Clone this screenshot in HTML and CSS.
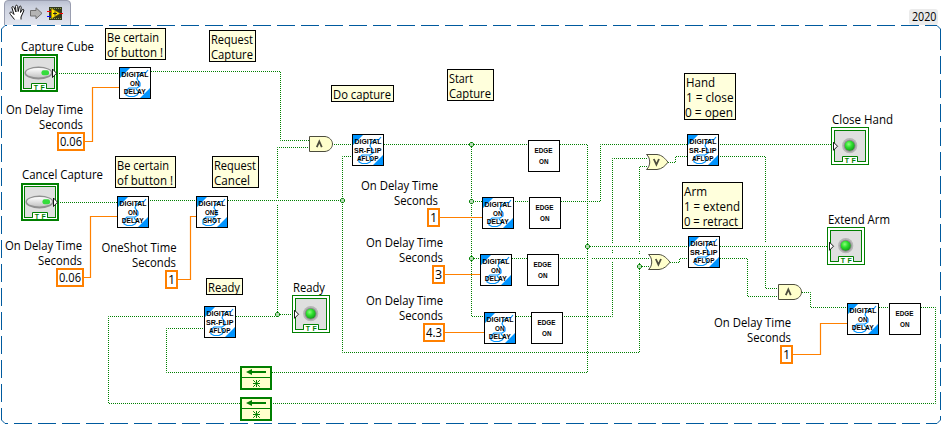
FILE: index.html
```html
<!DOCTYPE html>
<html lang="en">
<head>
<meta charset="utf-8">
<title>Block diagram</title>
<link rel="stylesheet" href="styles.css">
</head>
<body>
<svg class="diagram" width="942" height="425" viewBox="0 0 942 425">
  <defs>
    <pattern id="dots" width="2" height="2" patternUnits="userSpaceOnUse">
      <rect class="dot" width="1" height="1"/><rect class="dot" x="1" y="1" width="1" height="1"/>
    </pattern>
    <linearGradient id="tabFill" x1="0" y1="0" x2="0" y2="1">
      <stop offset="0" stop-color="#b9bfd0"/><stop offset=".25" stop-color="#ccd1df"/><stop offset="1" stop-color="#e3e6ef"/>
    </linearGradient>
    <radialGradient id="led" cx=".4" cy=".35" r=".7">
      <stop offset="0" stop-color="#8cff7c"/><stop offset=".45" stop-color="#2fe02f"/><stop offset="1" stop-color="#119a18"/>
    </radialGradient>
    <linearGradient id="pill" x1="0" y1="0" x2="0" y2="1">
      <stop offset="0" stop-color="#fff"/><stop offset="1" stop-color="#c4c4c4"/>
    </linearGradient>
    <g id="vi">
      <rect class="block" x=".5" y=".5" width="31" height="31"/>
      <path class="corner" d="M1 1H11L1 11ZM31 31V21L21 31Z"/>
      <path class="squiggle" d="M29 3L27 5.500H23L19 9L18 12L21 16V19L18 21H10L7 24V28L10 29.500H15L18 28L20 25L17 22"/>
      <text class="pixel" lengthAdjust="spacingAndGlyphs" x="2.500" y="10" textLength="27">DIGITAL</text>
    </g>
    <g id="delay">
      <use href="#vi"/>
      <text class="pixel" lengthAdjust="spacingAndGlyphs" x="11" y="19" textLength="9.500">ON</text>
      <text class="pixel" lengthAdjust="spacingAndGlyphs" x="4.700" y="27" textLength="22">DELAY</text>
    </g>
    <g id="shot">
      <use href="#vi"/>
      <text class="pixel" lengthAdjust="spacingAndGlyphs" x="9" y="19" textLength="13.500">ONE</text>
      <text class="pixel" lengthAdjust="spacingAndGlyphs" x="7" y="27" textLength="18">SHOT</text>
    </g>
    <g id="flip">
      <use href="#vi"/>
      <text class="pixel" lengthAdjust="spacingAndGlyphs" x="2" y="19" textLength="27.500">SR-FLIP</text>
      <text class="pixel" lengthAdjust="spacingAndGlyphs" x="5" y="27" textLength="21.500">AFLOP</text>
    </g>
    <g id="edge">
      <rect class="block" x=".5" y=".5" width="31" height="31"/>
      <text class="pixel" lengthAdjust="spacingAndGlyphs" x="6.500" y="13" textLength="18">EDGE</text>
      <text class="pixel" lengthAdjust="spacingAndGlyphs" x="11" y="24" textLength="9.500">ON</text>
    </g>
    <g id="tf">
      <path class="tf-box" d="M11.500 34.500V29.500H26.500V34.500"/>
      <path class="tf-gap" d="M12 34.500H26"/>
      <text class="tf-text" x="13.700" y="36" textLength="11">TF</text>
    </g>
    <g id="control">
      <rect class="control-frame" x="1" y="1" width="36" height="36"/>
      <rect class="face" x="3.500" y="3.500" width="31" height="31"/>
      <ellipse class="pill-rim" cx="18.500" cy="19" rx="14" ry="6.500"/>
      <ellipse class="pill" cx="18.500" cy="18.700" rx="12.500" ry="4.800"/>
      <rect class="pill-light" x="21.500" y="16.200" width="7.500" height="5" rx="2"/>
      <path class="port" d="M32.500 15V23.500L36.500 19.200Z"/>
      <use href="#tf"/>
    </g>
    <g id="indicator">
      <rect class="indicator-frame" x=".5" y=".5" width="37" height="37"/>
      <rect class="face" x="3.500" y="3.500" width="31" height="31"/>
      <circle class="bezel-outer" cx="18.700" cy="18.700" r="7.600"/>
      <circle class="bezel" cx="18.700" cy="18.700" r="6"/>
      <circle class="lamp" cx="18.700" cy="18.700" r="5"/>
      <path class="port" d="M2.500 15.200V23.300L6.500 19.200Z"/>
      <use href="#tf"/>
    </g>
    <g id="and">
      <path class="gate" d="M.5 .5H16C20.500 1 23.500 4.500 23.500 8S20.500 15 16 15.500H.5Z"/>
      <path class="gate-sign" d="M7.800 11.200L10.300 5.500L12.800 11.200"/>
    </g>
    <g id="or">
      <path class="gate" d="M.5 .5H11C16 1 19 4.500 22 8.200C19 12 16 15 11 15.500H.5C4.800 12 4.800 4 .5 .5Z"/>
      <path class="gate-sign" d="M7.800 5L10.400 10.700L13 5"/>
    </g>
    <g id="feedback">
      <rect class="feedback-box" x="1" y="1" width="30" height="22"/>
      <path class="feedback-line" d="M1 11.500H31"/>
      <path class="feedback-arrow" d="M6 6L12 3V5H26V7H12V9Z"/>
      <path class="feedback-line" d="M13 17.500H20M16.500 14V21M13.200 14.200L15.500 16.500M19.800 14.200L17.500 16.500M13.200 20.800L15.500 18.500M19.800 20.800L17.500 18.500"/>
    </g>
    <g id="node">
      <path class="junction" d="M-1 -2H1L2 -1V1L1 2H-1L-2 1V-1Z"/>
    </g>
  </defs>

  <!-- Structure frame -->
  <g class="frame">
    <path d="M5 25.500H937" stroke-dashoffset="-8"/>
    <path d="M5 423.500H937" stroke-dashoffset="-9"/>
    <path d="M1.500 29V420" stroke-dashoffset="5"/>
    <path d="M940.500 32V418"/>
    <path class="frame-corner" d="M1.500 31V29L5 25.500H7M935 25.500H937L940.500 29V50M1.500 418V420L5 423.500M937 423.500L940.500 420V417"/>
  </g>

  <!-- Subdiagram tab -->
  <path class="tab" d="M4.500 25V4Q4.500 .5 8 .5H67Q70.500 .5 70.500 4V25"/>
  <path class="hand" d="M14.500 19.500L10.500 14.500C9 12.500 10.500 11.500 12 12.500L14 14.500L12 8C11.500 6.300 13.300 6 14 7.500L16 12L15.500 6.500C15.500 4.800 17.500 4.800 17.700 6.500L18.200 11.500L19.300 7C19.800 5.500 21.500 6 21.200 7.500L20.500 12.500L22 10C23 8.500 24.300 9.500 23.700 11L21 17V19.500"/>
  <path class="step" d="M30.500 10.500H36V7.800L42 13.300L36 18.800V16H30.500Z"/>
  <rect class="chip" x="49" y="7" width="13" height="13"/>
  <path class="chip-pins" d="M50 8.500H62M50 18.500H62"/>
  <path class="chip-red" d="M47 11.500H51M59 13.500H63"/>
  <path class="chip-blue" d="M47 16.500H51"/>
  <path class="chip-arrow" d="M51.500 8.500L60 13.500L51.500 18.500Z"/>
  <path class="chip-plus" d="M53 13.500H57M55 11.500V15.500"/>
  <rect class="year-box" x="909" y="9" width="29" height="16" rx="3"/>

  <!-- Boolean wires -->
  <g class="wire">
    <path d="M58 73.500H119"/>
    <path d="M151 71.500H280.500V140.500H309"/>
    <path d="M334 144.500H352"/>
    <path d="M59 202.500H117"/>
    <path d="M149 200.500H196"/>
    <path d="M228 200.500H342.500"/>
    <path d="M352 156.500H342.500V352.500H639.500V263M639.500 254V250M639.500 243V166.500H648"/>
    <path d="M309 147.500H277.500V198M277.500 204V314.500H292"/>
    <path d="M236 316.500H277"/>
    <path d="M384 144.500H528"/>
    <path d="M471.500 144.500V316.500H484"/>
    <path d="M472 201.500H482M514 201.500H529"/>
    <path d="M472 258.500H480M512 258.500H527"/>
    <path d="M516 316.500H531"/>
    <path d="M560 144.500H587.500V372.500H272"/>
    <path d="M240 372.500H166.500V328.500H204"/>
    <path d="M561 201.500H600.500V144.500H687"/>
    <path d="M559 258.500H585M591 258.500H650"/>
    <path d="M563 316.500H612.500V262M612.500 254V250M612.500 243V158.500H648"/>
    <path d="M588 246.500H688"/>
    <path d="M640 266.500H650"/>
    <path d="M668 162.500H675.500V156.500H687"/>
    <path d="M670 262.500H679.500V258.500H688"/>
    <path d="M719 144.500H831"/>
    <path d="M719 156.500H765.500V243M765.500 250V288.500H778"/>
    <path d="M720 246.500H827"/>
    <path d="M720 258.500H747.500V296.500H778"/>
    <path d="M802 292.500H810.500V307.500H847"/>
    <path d="M879 307.500H889"/>
    <path d="M921 307.500H935.500V403.500H272"/>
    <path d="M240 403.500H108.500V316.500H204"/>
  </g>

  <!-- Numeric wires -->
  <g class="numeric-wire">
    <path d="M85 141.500H92.500V87.500H119"/>
    <path d="M84 277.500H90.500V216.500H117"/>
    <path d="M178 279.500H190.500V216.500H196"/>
    <path d="M440 217.500H482M445 274.500H480M445 332.500H484"/>
    <path d="M793 354.500H820.500V323.500H847"/>
  </g>

  <use href="#node" x="342.500" y="200.500"/>
  <use href="#node" x="471.500" y="144.500"/>
  <use href="#node" x="471.500" y="201.500"/>
  <use href="#node" x="471.500" y="258.500"/>
  <use href="#node" x="587.500" y="246.500"/>
  <use href="#node" x="639.500" y="266.500"/>
  <use href="#node" x="277.500" y="314.500"/>

  <use href="#control" x="20" y="54"/>
  <use href="#control" x="21" y="183"/>
  <use href="#indicator" x="292" y="295"/>
  <use href="#indicator" x="831" y="127"/>
  <use href="#indicator" x="827" y="227"/>

  <use href="#delay" x="119" y="67"/>
  <use href="#delay" x="117" y="196"/>
  <use href="#shot" x="196" y="196"/>
  <use href="#flip" x="204" y="306"/>
  <use href="#flip" x="352" y="134"/>
  <use href="#delay" x="482" y="197"/>
  <use href="#delay" x="480" y="254"/>
  <use href="#delay" x="484" y="312"/>
  <use href="#flip" x="687" y="134"/>
  <use href="#flip" x="688" y="236"/>
  <use href="#delay" x="847" y="303"/>
  <use href="#edge" x="528" y="140"/>
  <use href="#edge" x="529" y="197"/>
  <use href="#edge" x="527" y="254"/>
  <use href="#edge" x="531" y="312"/>
  <use href="#edge" x="889" y="303"/>

  <use href="#and" x="309" y="136"/>
  <use href="#and" x="778" y="284"/>
  <use href="#or" x="646" y="154"/>
  <use href="#or" x="648" y="254"/>
  <use href="#feedback" x="240" y="366"/>
  <use href="#feedback" x="240" y="397"/>

  <!-- Comments -->
  <g class="note">
    <rect x="105.500" y="28.500" width="60" height="31"/>
    <rect x="209.500" y="30.500" width="46" height="31"/>
    <rect x="115.500" y="156.500" width="60" height="31"/>
    <rect x="212.500" y="156.500" width="46" height="31"/>
    <rect x="206.500" y="278.500" width="36" height="16"/>
    <rect x="331.500" y="85.500" width="62" height="16"/>
    <rect x="447.500" y="69.500" width="46" height="31"/>
    <rect x="684.500" y="73.500" width="51" height="46"/>
    <rect x="682.500" y="182.500" width="60" height="46"/>
  </g>

  <!-- Constants -->
  <g class="constant">
    <rect x="58" y="133" width="26" height="17"/>
    <rect x="57" y="269" width="26" height="17"/>
    <rect x="166" y="271" width="11" height="17"/>
    <rect x="428" y="209" width="11" height="17"/>
    <rect x="433" y="266" width="11" height="17"/>
    <rect x="424" y="324" width="20" height="17"/>
    <rect x="781" y="346" width="11" height="17"/>
  </g>

  <g class="label">
    <text lengthAdjust="spacingAndGlyphs" x="107" y="41.500" textLength="52">Be certain</text>
    <text lengthAdjust="spacingAndGlyphs" x="107" y="56.500" textLength="56">of button !</text>
    <text lengthAdjust="spacingAndGlyphs" x="211" y="43.500" textLength="42">Request</text>
    <text lengthAdjust="spacingAndGlyphs" x="211" y="58.500" textLength="42">Capture</text>
    <text lengthAdjust="spacingAndGlyphs" x="117" y="169.500" textLength="52">Be certain</text>
    <text lengthAdjust="spacingAndGlyphs" x="117" y="184.500" textLength="56">of button !</text>
    <text lengthAdjust="spacingAndGlyphs" x="214" y="169.500" textLength="42">Request</text>
    <text lengthAdjust="spacingAndGlyphs" x="214" y="184.500" textLength="36">Cancel</text>
    <text lengthAdjust="spacingAndGlyphs" x="208" y="291.500" textLength="32">Ready</text>
    <text lengthAdjust="spacingAndGlyphs" x="333" y="98.500" textLength="58">Do capture</text>
    <text lengthAdjust="spacingAndGlyphs" x="449" y="82.500" textLength="24">Start</text>
    <text lengthAdjust="spacingAndGlyphs" x="449" y="97.500" textLength="42">Capture</text>
    <text lengthAdjust="spacingAndGlyphs" x="686" y="86.500" textLength="29">Hand</text>
    <text lengthAdjust="spacingAndGlyphs" x="686" y="101.500" textLength="47.500">1 = close</text>
    <text lengthAdjust="spacingAndGlyphs" x="685" y="116.500" textLength="48">0 = open</text>
    <text lengthAdjust="spacingAndGlyphs" x="684" y="195.500" textLength="23">Arm</text>
    <text lengthAdjust="spacingAndGlyphs" x="684" y="210.500" textLength="56">1 = extend</text>
    <text lengthAdjust="spacingAndGlyphs" x="684" y="225.500" textLength="54">0 = retract</text>

    <text lengthAdjust="spacingAndGlyphs" x="21" y="50.500" textLength="73">Capture Cube</text>
    <text lengthAdjust="spacingAndGlyphs" x="22" y="179" textLength="81">Cancel Capture</text>
    <text lengthAdjust="spacingAndGlyphs" x="293" y="291.500" textLength="32">Ready</text>
    <text lengthAdjust="spacingAndGlyphs" x="832" y="123.500" textLength="61">Close Hand</text>
    <text lengthAdjust="spacingAndGlyphs" x="828" y="223.500" textLength="62">Extend Arm</text>
    <text lengthAdjust="spacingAndGlyphs" x="6" y="113.500" textLength="77">On Delay Time</text>
    <text lengthAdjust="spacingAndGlyphs" x="39" y="128.500" textLength="44">Seconds</text>
    <text lengthAdjust="spacingAndGlyphs" x="5" y="249.500" textLength="77">On Delay Time</text>
    <text lengthAdjust="spacingAndGlyphs" x="38" y="264.500" textLength="44">Seconds</text>
    <text lengthAdjust="spacingAndGlyphs" x="101.500" y="251.500" textLength="75">OneShot Time</text>
    <text lengthAdjust="spacingAndGlyphs" x="132" y="266.500" textLength="44">Seconds</text>
    <text lengthAdjust="spacingAndGlyphs" x="361" y="189.500" textLength="77">On Delay Time</text>
    <text lengthAdjust="spacingAndGlyphs" x="394" y="204.500" textLength="44">Seconds</text>
    <text lengthAdjust="spacingAndGlyphs" x="366" y="246.500" textLength="77">On Delay Time</text>
    <text lengthAdjust="spacingAndGlyphs" x="399" y="261.500" textLength="44">Seconds</text>
    <text lengthAdjust="spacingAndGlyphs" x="366" y="304.500" textLength="77">On Delay Time</text>
    <text lengthAdjust="spacingAndGlyphs" x="399" y="319.500" textLength="44">Seconds</text>
    <text lengthAdjust="spacingAndGlyphs" x="714" y="326.500" textLength="77">On Delay Time</text>
    <text lengthAdjust="spacingAndGlyphs" x="747" y="341.500" textLength="44">Seconds</text>
    <text lengthAdjust="spacingAndGlyphs" x="60" y="146" textLength="22">0.06</text>
    <text lengthAdjust="spacingAndGlyphs" x="59" y="282" textLength="22">0.06</text>
    <text x="168" y="284">1</text>
    <text x="430" y="222">1</text>
    <text x="435" y="279">3</text>
    <text lengthAdjust="spacingAndGlyphs" x="426" y="337" textLength="16">4.3</text>
    <text x="783" y="359">1</text>
    <text lengthAdjust="spacingAndGlyphs" x="912" y="21" textLength="24.500">2020</text>
  </g>
</svg>
</body>
</html>
```
FILE: styles.css
```css
body { margin: 0; background: #fff; overflow: hidden; }
.diagram { display: block; }

.frame path { fill: none; stroke: #005a9e; stroke-width: 1; stroke-dasharray: 18 6; }
.frame .frame-corner { stroke-dasharray: none; }

.tab { fill: url(#tabFill); stroke: #9a9eb0; }
.hand { fill: #fff; stroke: #111; stroke-width: 1; }
.step { fill: #b4b4b4; stroke: #707070; }
.chip { fill: #333a1c; }
.chip-pins { stroke: #8f9a50; stroke-dasharray: 1 1; }
.chip-red { stroke: #f00; }
.chip-blue { stroke: #00f; }
.chip-arrow { fill: #ffe600; stroke: #a08000; stroke-width: .5; }
.chip-plus { stroke: #222; }
.year-box { fill: #ebebeb; }

.dot { fill: #008000; shape-rendering: crispEdges; }
.wire path { fill: none; stroke: url(#dots); stroke-width: 1; }
.numeric-wire path { fill: none; stroke: #ff8000; stroke-width: 1.2; }
.junction { fill: #b5dcb5; stroke: #007f00; }

.block { fill: #fff; stroke: #000; }
.corner { fill: #0094ff; }
.squiggle { fill: none; stroke: #0094ff; stroke-width: 1.2; }
.pixel { font: bold 7.2px "Liberation Sans", sans-serif; fill: #000; }

.control-frame { fill: #fff; stroke: #007f00; stroke-width: 2; }
.indicator-frame { fill: #fff; stroke: #007f00; }
.face { fill: #dfdfdf; stroke: #007f00; }
.pill-rim { fill: #909090; }
.pill { fill: url(#pill); }
.pill-light { fill: #35dc3c; }
.bezel-outer { fill: #b5b5b5; }
.bezel { fill: #8b8b8b; }
.lamp { fill: url(#led); }
.port { fill: #fff; stroke: #000; stroke-width: .9; }
.tf-box { fill: #fff; stroke: #007f00; }
.tf-gap { stroke: #fff; }
.tf-text { font: bold 7px "Liberation Sans", sans-serif; fill: #007f00; }

.gate { fill: #ffffcc; stroke: #4c4c3d; }
.gate-sign { fill: none; stroke: #4c4c3d; stroke-width: 1.8; }
.feedback-box { fill: #ffffcc; stroke: #007f00; stroke-width: 2; }
.feedback-line { fill: none; stroke: #007f00; }
.feedback-arrow { fill: #007f00; }

.note rect { fill: #ffffdc; stroke: #000; }
.constant rect { fill: #fff; stroke: #ff8000; stroke-width: 2; }
.label { font: 12.5px "Open Sans", "Noto Sans", sans-serif; fill: #000; }
```
